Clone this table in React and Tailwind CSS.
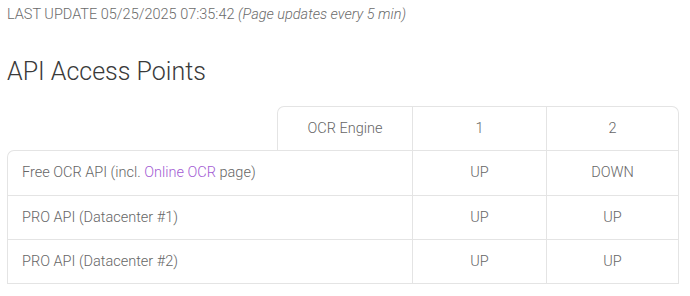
import React from "react";

const rows = [
  { name: "free", up1: "UP", up2: "DOWN", h: "h-[45px]" },
  { name: "PRO API (Datacenter #1)", up1: "UP", up2: "UP", h: "h-[44px]" },
  { name: "PRO API (Datacenter #2)", up1: "UP", up2: "UP", h: "h-[45px]" },
];

export default function App() {
  return (
    <div
      className="w-[690px] h-[296px] bg-white px-[7px] pt-[5px] font-light text-[#666]"
      style={{ fontFamily: "Roboto, 'Liberation Sans', sans-serif" }}
    >
      {/* Last update line */}
      <p className="text-[14.5px] leading-[20px] text-[#6b6b6b]">
        LAST UPDATE 05/25/2025 07:35:42{" "}
        <em className="italic">(Page updates every 5 min)</em>
      </p>

      <h2 className="mt-[32px] text-[25px] leading-[30px] text-[#3a3a3a] font-light">
        API Access Points
      </h2>

      {/* Status table */}
      <div className="mt-[19px] grid grid-cols-[270px_135px_134px_133px] text-[14.5px]">
        <div className="h-[44px]"></div>
        <div className="h-[44px] flex items-center justify-center border-l border-t border-[#e4e4e4] rounded-tl-[7px]">
          OCR Engine
        </div>
        <div className="h-[44px] flex items-center justify-center border-l border-t border-[#e4e4e4]">
          1
        </div>
        <div className="h-[44px] flex items-center justify-center border-l border-t border-r border-[#e4e4e4] rounded-tr-[7px]">
          2
        </div>

        {rows.map((r, i) => {
          const last = i === rows.length - 1 ? "border-b" : "";
          return (
            <React.Fragment key={i}>
              <div
                className={
                  "col-span-2 flex items-center pl-[14px] border-l border-t border-[#e4e4e4] " +
                  r.h + " " + (i === 0 ? "rounded-tl-[7px] " : "") + last
                }
              >
                {r.name === "free" ? (
                  <span>
                    Free OCR API (incl.{" "}
                    <a href="#" className="text-[#a35bd3]">Online OCR</a> page)
                  </span>
                ) : (
                  r.name
                )}
              </div>
              <div className={"flex items-center justify-center border-l border-t border-[#e4e4e4] " + last}>
                {r.up1}
              </div>
              <div className={"flex items-center justify-center border-l border-t border-r border-[#e4e4e4] " + last}>
                {r.up2}
              </div>
            </React.Fragment>
          );
        })}
      </div>
    </div>
  );
}
